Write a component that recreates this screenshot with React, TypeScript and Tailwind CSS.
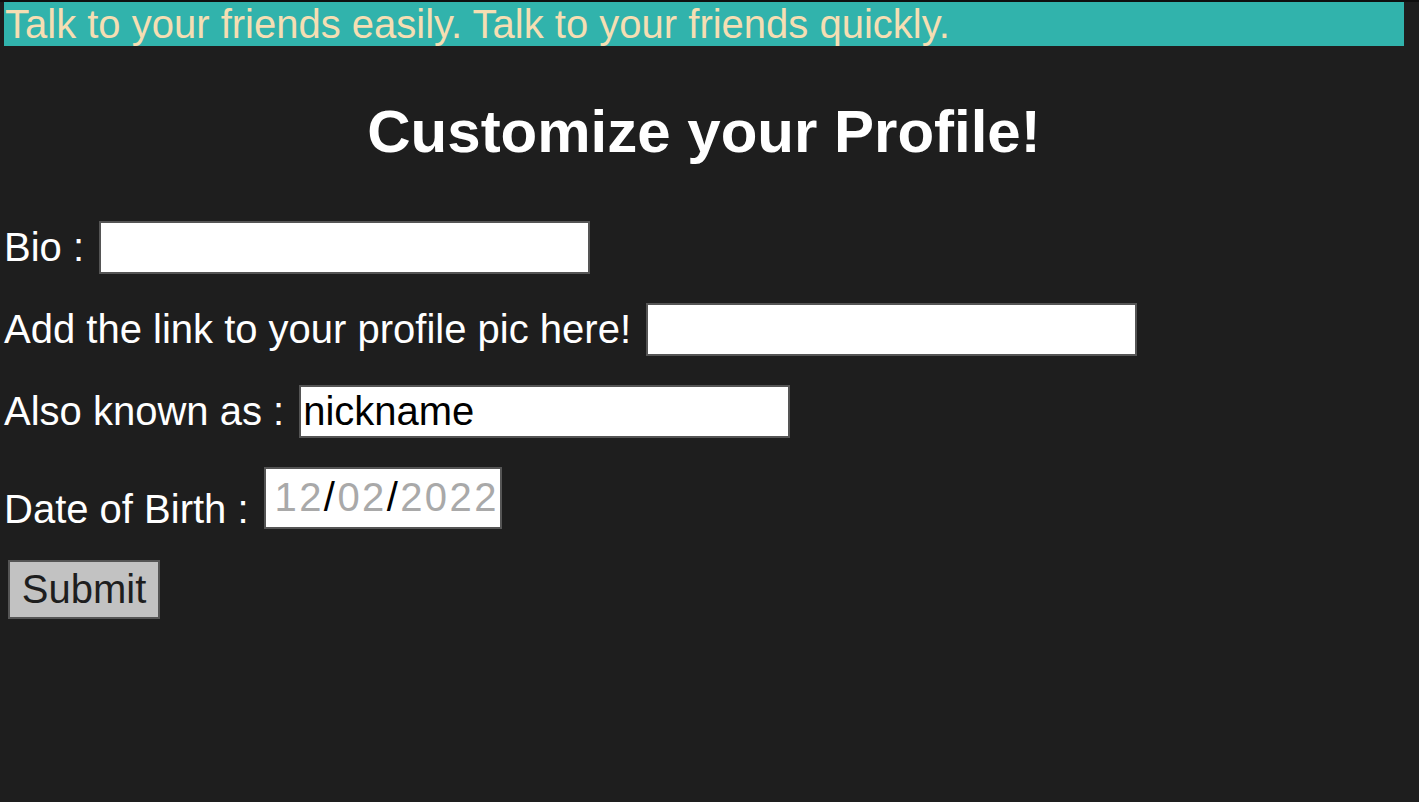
import { useState } from "react"

export default function App() {
  const [bio, setBio] = useState("")
  const [pic, setPic] = useState("")
  const [nickname, setNickname] = useState("nickname")

  const inputClass =
    "w-[491px] h-[53px] border-2 border-[#555555] bg-white px-[2px] text-black text-[40px] leading-[45px] outline-none"

  return (
    <div className="min-h-screen bg-[#1e1e1e] font-['Liberation_Sans',Arial,sans-serif] text-white text-[40px]">
      <div className="h-[2px] bg-[#0f0f0f]" />

      <div className="w-[1400px] ml-[4px]">
        {/* banner */}
        <div className="h-[44px] bg-[#31b3ac] pl-[1px] leading-[44px] text-[#f5deb3] whitespace-nowrap">
          Talk to your friends easily. Talk to your friends quickly.
        </div>

        <h1 className="mt-[56px] h-[60px] text-center text-[60px] leading-[60px] font-bold">
          Customize your Profile!
        </h1>
      </div>

      <form
        className="mt-[59px] ml-[4px] flex flex-col gap-[29px]"
        onSubmit={(e) => e.preventDefault()}
      >
        <div className="flex items-center gap-[15px]">
          <label className="leading-[45px]">Bio :</label>
          <input className={inputClass} value={bio} onChange={(e) => setBio(e.target.value)} />
        </div>

        <div className="flex items-center gap-[15px]">
          <label className="leading-[45px]">Add the link to your profile pic here!</label>
          <input className={inputClass} value={pic} onChange={(e) => setPic(e.target.value)} />
        </div>

        <div className="flex items-center gap-[15px]">
          <label className="leading-[45px]">Also known as :</label>
          <input
            className={inputClass}
            value={nickname}
            onChange={(e) => setNickname(e.target.value)}
          />
        </div>

        <div className="flex items-end gap-[15px]">
          <label className="leading-[45px] mb-[-3px]">Date of Birth :</label>
          <div className="w-[238px] h-[62px] border-2 border-[#555555] bg-white pl-[9px] pt-[6px] leading-[45px] tracking-[2.4px] text-[#a9a9a9] whitespace-nowrap">
            12<span className="text-black">/</span>02<span className="text-black">/</span>2022
          </div>
        </div>

        <div className="mt-[1px]">
          <button
            type="submit"
            className="ml-[4px] w-[152px] h-[59px] border-2 border-[#555555] bg-[#c2c2c2] text-[#1e1e1e] text-[40px] leading-[45px]"
          >
            Submit
          </button>
        </div>
      </form>
    </div>
  )
}
